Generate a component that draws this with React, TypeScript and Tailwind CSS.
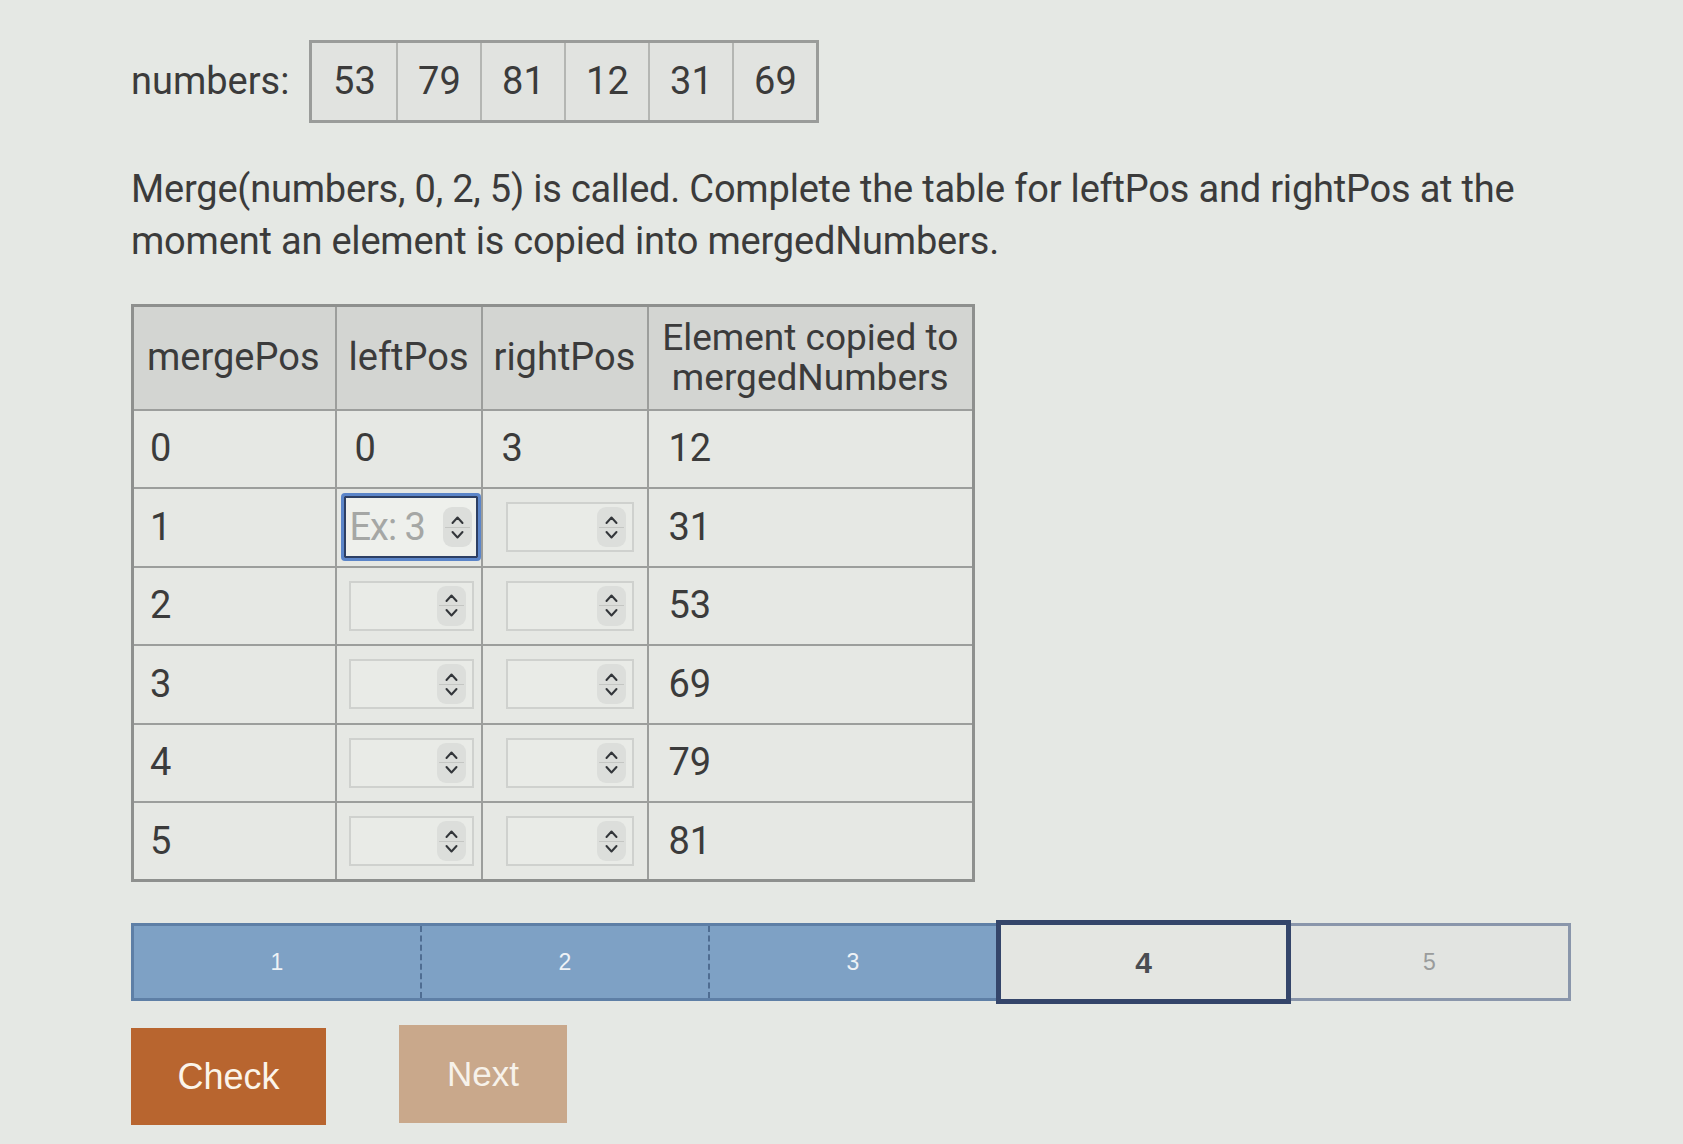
import { useState } from "react";

const numbers = [53, 79, 81, 12, 31, 69];

const rows = [
  { pos: 0, left: "0", right: "3", copied: 12, fixed: true },
  { pos: 1, copied: 31 },
  { pos: 2, copied: 53 },
  { pos: 3, copied: 69 },
  { pos: 4, copied: 79 },
  { pos: 5, copied: 81 },
];

function Spinner() {
  return (
    <div className="flex h-[40px] w-[29px] flex-col items-center justify-center rounded-[9px] bg-[#dcdedb]">
      <svg width="15" height="12" viewBox="0 0 15 12" className="mb-[1px]">
        <path d="M2.5 9 L7.5 3.5 L12.5 9" fill="none" stroke="#33363a" strokeWidth="2" strokeLinecap="round" strokeLinejoin="round" />
      </svg>
      <div className="h-px w-[25px] bg-[#c4c6c3]" />
      <svg width="15" height="12" viewBox="0 0 15 12" className="mt-[1px]">
        <path d="M2.5 3 L7.5 8.5 L12.5 3" fill="none" stroke="#33363a" strokeWidth="2" strokeLinecap="round" strokeLinejoin="round" />
      </svg>
    </div>
  );
}

function NumberBox({ focused, className }: { focused?: boolean; className: string }) {
  const [value, setValue] = useState("");
  return (
    <div
      className={
        focused
          ? `flex h-[68px] ${className} items-center rounded-[4px] border-[3px] border-[#5b85c9] bg-[#eef0ec] pr-[6px] shadow-[inset_0_0_0_2px_#2d3f63]`
          : `flex h-[50px] ${className} items-center border-2 border-[#cfd1ce] bg-[#e9ebe7] pr-[6px]`
      }
    >
      <input
        value={value}
        onChange={(e) => setValue(e.target.value)}
        placeholder={focused ? "Ex: 3" : ""}
        className="w-full min-w-0 flex-1 bg-transparent pl-[6px] text-[38px] tracking-[-1px] text-[#4a4a4a] outline-none placeholder:text-[#a5a7a5]"
      />
      <Spinner />
    </div>
  );
}

export default function App() {
  return (
    <div className="min-h-[1144px] bg-[#e5e8e4] pl-[131px] pt-[40px] font-['Roboto',sans-serif] text-[#3b3b3b]">
      <div className="flex items-center">
        <span className="mr-[20px] text-[38px]">numbers:</span>
        <div className="flex border-[3px] border-[#9a9c9a] bg-[#e1e3e0]">
          {numbers.map((n, i) => (
            <div
              key={i}
              className={`flex h-[77px] w-[84px] items-center justify-center text-[38px] ${i > 0 ? "border-l-2 border-[#b4b6b3]" : ""}`}
            >
              {n}
            </div>
          ))}
        </div>
      </div>

      <p className="mt-[40px] w-[1440px] text-[38px] leading-[52px] tracking-[-0.2px]">
        Merge(numbers, 0, 2, 5) is called. Complete the table for leftPos and rightPos at the moment an element is copied into mergedNumbers.
      </p>

      <table className="mt-[37px] w-[841px] table-fixed border-collapse border-[3px] border-[#8e908e] text-[38px]">
        <colgroup>
          <col className="w-[203px]" />
          <col className="w-[146px]" />
          <col className="w-[166px]" />
          <col className="w-[326px]" />
        </colgroup>
        <thead>
          <tr className="h-[104px] bg-[#d3d5d2]">
            <th className="whitespace-nowrap border-2 border-[#9c9e9c] pl-[13px] text-left font-normal">mergePos</th>
            <th className="whitespace-nowrap border-2 border-[#9c9e9c] pl-[12px] text-left font-normal">leftPos</th>
            <th className="whitespace-nowrap border-2 border-[#9c9e9c] pl-[11px] text-left font-normal">rightPos</th>
            <th className="whitespace-nowrap border-2 border-[#9c9e9c] text-center text-[37px] font-normal leading-[40px]">
              <div>Element copied to</div>
              <div>mergedNumbers</div>
            </th>
          </tr>
        </thead>
        <tbody>
          {rows.map((r) => (
            <tr key={r.pos} className="h-[78.5px] bg-[#e6e8e4]">
              <td className="border-2 border-[#9c9e9c] pl-[16px]">{r.pos}</td>
              <td className={`border-2 border-[#9c9e9c] ${r.fixed ? "pl-[18px]" : "px-[4px]"}`}>
                {r.fixed ? (
                  r.left
                ) : r.pos === 1 ? (
                  <NumberBox focused className="w-[140px]" />
                ) : (
                  <NumberBox className="ml-[8px] w-[125px]" />
                )}
              </td>
              <td className={`border-2 border-[#9c9e9c] ${r.fixed ? "pl-[19px]" : "pl-[23px]"}`}>
                {r.fixed ? r.right : <NumberBox className="w-[128px]" />}
              </td>
              <td className="border-2 border-[#9c9e9c] pl-[20px]">{r.copied}</td>
            </tr>
          ))}
        </tbody>
      </table>

      <div className="mt-[41px] flex h-[78px] w-[1440px] items-stretch">
        <div className="flex flex-1 border-[3px] border-r-0 border-[#5e7fa6] bg-[#7ea1c5]">
          {[1, 2, 3].map((n) => (
            <div
              key={n}
              className={`flex flex-1 items-center justify-center font-['Liberation_Sans',sans-serif] text-[23px] text-[#eef2f6] ${n > 1 ? "border-l-2 border-dashed border-[#4f6d92]" : ""}`}
            >
              {n}
            </div>
          ))}
        </div>
        <div className="-my-[3px] flex w-[295px] items-center justify-center border-[5px] border-[#34456a] bg-[#e4e6e2] font-['Liberation_Sans',sans-serif] text-[30px] font-bold text-[#4a4d52]">
          4
        </div>
        <div className="flex w-[280px] items-center justify-center border-[3px] border-l-0 border-[#8a96ab] bg-[#e2e4e1] font-['Liberation_Sans',sans-serif] text-[23px] text-[#9a9c9c]">
          5
        </div>
      </div>

      <div className="mt-[27px] flex items-start gap-[73px] font-['Liberation_Sans',sans-serif]">
        <button className="h-[97px] w-[195px] bg-[#b8652f] text-[36px] text-[#fbf4ea]">Check</button>
        <button className="-mt-[3px] h-[98px] w-[168px] bg-[#c9a88b] text-[35px] text-[#f7f2ea]">Next</button>
      </div>
    </div>
  );
}
